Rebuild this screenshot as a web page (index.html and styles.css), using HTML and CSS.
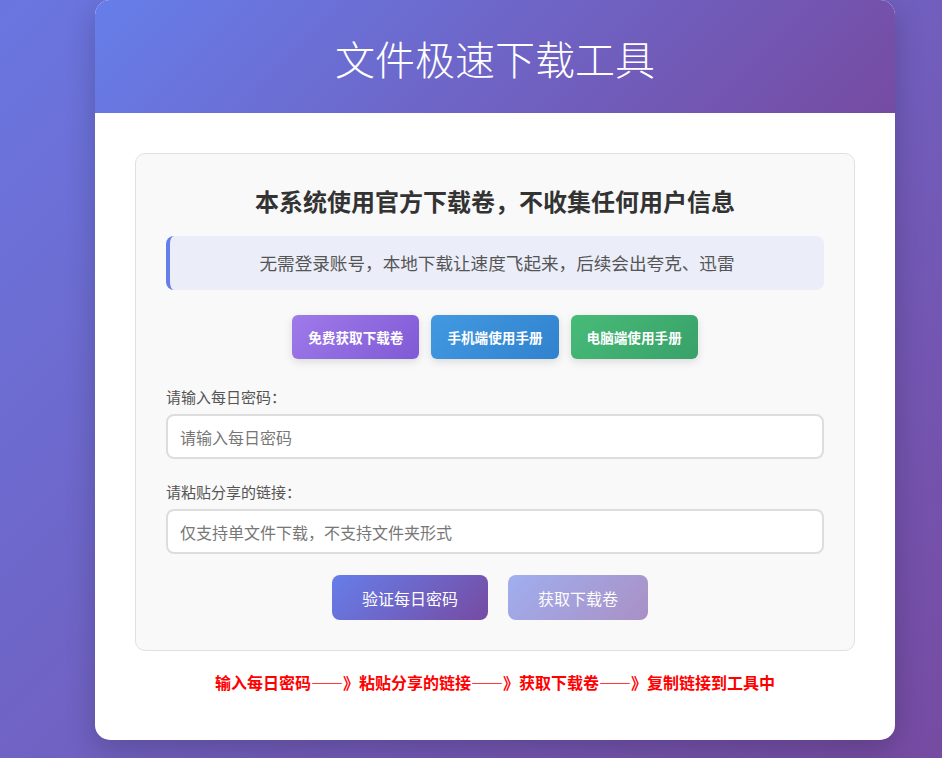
FILE: index.html
```html
<!DOCTYPE html>
<html lang="zh-CN">
<head>
<meta charset="UTF-8">
<title>文件极速下载工具</title>
<link rel="stylesheet" href="styles.css">
</head>
<body>
<div class="card">
  <header class="header">
    <h1 class="title">文件极速下载工具</h1>
  </header>
  <main class="body">
    <section class="panel">
      <h2 class="panel-title">本系统使用官方下载卷，不收集任何用户信息</h2>
      <div class="notice">无需登录账号，本地下载让速度飞起来，后续会出夸克、迅雷</div>
      <div class="links">
        <a class="link-btn purple">免费获取下载卷</a>
        <a class="link-btn blue">手机端使用手册</a>
        <a class="link-btn green">电脑端使用手册</a>
      </div>
      <div class="field">
        <label class="label">请输入每日密码：</label>
        <input class="input" type="text" placeholder="请输入每日密码">
      </div>
      <div class="field">
        <label class="label">请粘贴分享的链接：</label>
        <input class="input" type="text" placeholder="仅支持单文件下载，不支持文件夹形式">
      </div>
      <div class="actions">
        <button class="btn">验证每日密码</button>
        <button class="btn disabled" disabled>获取下载卷</button>
      </div>
    </section>
    <p class="flow">输入每日密码——》粘贴分享的链接——》获取下载卷——》复制链接到工具中</p>
  </main>
</div>
</body>
</html>
```

FILE: styles.css
```css
* { box-sizing: border-box; }
html, body { margin: 0; padding: 0; }
body {
  font-family: "Microsoft YaHei", "Noto Sans CJK SC", "Noto Sans", sans-serif;
  background: linear-gradient(135deg, #6a76e0 0%, #764ba2 100%);
  min-height: 100vh;
  padding: 0 0 18px 95px;
}
.card {
  width: 800px;
  background: #fff;
  border-radius: 15px;
  overflow: hidden;
  box-shadow: 0 10px 30px rgba(0, 0, 0, 0.2);
}
.header {
  background: linear-gradient(135deg, #667eea 0%, #764ba2 100%);
  height: 113px;
  display: flex;
  align-items: center;
  justify-content: center;
  padding-top: 2px;
}
.title {
  margin: 0;
  color: #fff;
  font-size: 40px;
  font-weight: 300;
  line-height: 1;
}
.body {
  padding: 40px 40px 47px;
}
.panel {
  background: #f9f9f9;
  border: 1px solid #e0e0e0;
  border-radius: 10px;
  padding: 30px 30px 30px;
}
.panel-title {
  margin: 0 0 18px;
  text-align: center;
  font-size: 24px;
  line-height: 34px;
  font-weight: 700;
  color: #333;
}
.notice {
  background: #ebedf9;
  border-left: 4px solid #667eea;
  border-radius: 8px;
  padding: 15px;
  text-align: center;
  color: #555;
  font-size: 17.6px;
  line-height: 24px;
}
.links {
  display: flex;
  justify-content: center;
  gap: 12px;
  margin: 25px 0 27px;
}
.link-btn {
  display: block;
  padding: 12px 16px;
  border-radius: 6px;
  color: #fff;
  font-size: 13.6px;
  font-weight: 700;
  line-height: 20px;
  box-shadow: 0 3px 8px rgba(0, 0, 0, 0.12);
  cursor: pointer;
}
.purple { background: linear-gradient(135deg, #9f7aea 0%, #805ad5 100%); }
.blue { background: linear-gradient(135deg, #4299e1 0%, #3182ce 100%); }
.green { background: linear-gradient(135deg, #48bb78 0%, #38a169 100%); }
.field + .field { margin-top: 22px; }
.label {
  display: block;
  color: #555;
  font-size: 15px;
  line-height: 22px;
  margin-bottom: 6px;
}
.input {
  display: block;
  width: 100%;
  height: 45px;
  border: 2px solid #ddd;
  border-radius: 8px;
  background: #fff;
  padding: 0 12px;
  font-family: inherit;
  font-size: 16px;
  color: #333;
}
.input::placeholder { color: #777; }
.actions {
  display: flex;
  justify-content: center;
  gap: 20px;
  margin-top: 21px;
  padding-right: 10px;
}
.btn {
  height: 45px;
  padding: 0 30px;
  border: none;
  border-radius: 8px;
  background: linear-gradient(135deg, #667eea 0%, #764ba2 100%);
  color: #fff;
  font-family: inherit;
  font-size: 16px;
  cursor: pointer;
}
.btn.disabled { opacity: 0.6; cursor: not-allowed; }
.flow {
  margin: 20px 0 0;
  text-align: center;
  color: #ff0000;
  font-weight: 700;
  font-size: 16px;
  line-height: 22px;
}
```
